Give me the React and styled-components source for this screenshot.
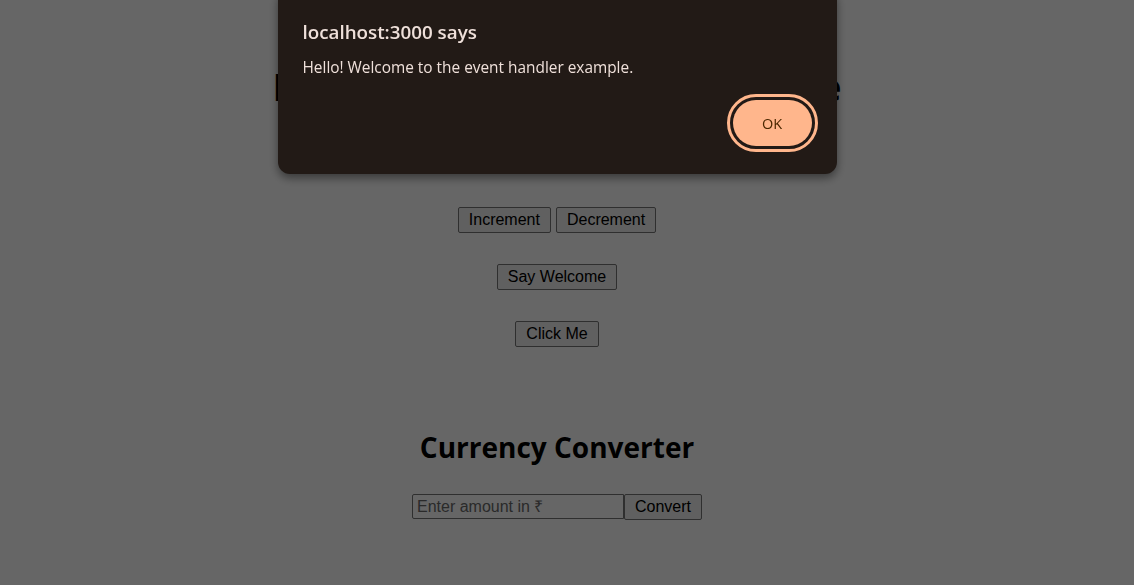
import styled, { createGlobalStyle } from 'styled-components';

const GlobalStyle = createGlobalStyle`
  html, body {
    margin: 0;
    background: #ffffff;
  }
`;

const Page = styled.div`
  width: 1114px;
  min-height: 585px;
  padding-top: 63px;
  box-sizing: border-box;
  display: flex;
  flex-direction: column;
  align-items: center;
  font-family: "Open Sans", "Noto Sans", sans-serif;
  color: #000;
`;

const Title = styled.h1`
  margin: 0;
  font-size: 37.6px;
  line-height: 48px;
  font-weight: 700;
`;

const Row = styled.div`
  display: flex;
  gap: 5px;
  margin-top: ${(p) => p.$top}px;
`;

const Btn = styled.button`
  font-family: "Liberation Sans", Arial, sans-serif;
  font-size: 16px;
  line-height: 18px;
  height: 26px;
  padding: 0 10px;
  background: #efefef;
  color: #000;
  border: 1px solid #767676;
  border-radius: 2px;
  box-sizing: border-box;
`;

const Converter = styled.section`
  margin-top: 82px;
  display: flex;
  flex-direction: column;
  align-items: center;
`;

const SubTitle = styled.h2`
  margin: 0;
  font-size: 28px;
  line-height: 36px;
  font-weight: 700;
`;

const InputRow = styled.div`
  display: flex;
  margin-top: 29px;
`;

const Amount = styled.input`
  width: 212px;
  height: 25px;
  box-sizing: border-box;
  padding: 1px 4px;
  border: 1px solid #767676;
  border-radius: 2px 0 0 2px;
  font-family: "Liberation Sans", Arial, sans-serif;
  font-size: 16px;
  &::placeholder {
    color: #6a6a6a;
  }
`;

const Backdrop = styled.div`
  position: fixed;
  inset: 0;
  background: rgba(0, 0, 0, 0.6);
  display: flex;
  justify-content: center;
  align-items: flex-start;
  padding-right: 20px;
`;

const Dialog = styled.div`
  margin-top: -12px;
  width: 559px;
  box-sizing: border-box;
  padding: 32px 24px 28px 25px;
  background: #221a16;
  border-radius: 12px;
  box-shadow: 0 4px 10px rgba(0, 0, 0, 0.45);
  font-family: "Open Sans", "Noto Sans", sans-serif;
  color: #efe0da;
`;

const DialogTitle = styled.div`
  font-size: 18.8px;
  line-height: 24px;
  font-weight: 600;
`;

const DialogText = styled.div`
  margin-top: 13px;
  font-size: 15.4px;
  line-height: 21px;
`;

const Actions = styled.div`
  display: flex;
  justify-content: flex-end;
  margin-top: 22px;
  padding-right: 1px;
`;

const OkButton = styled.button`
  width: 79px;
  height: 46px;
  border: none;
  border-radius: 999px;
  background: #ffb68c;
  color: #4a2700;
  font-family: "Open Sans", "Noto Sans", sans-serif;
  font-size: 14.5px;
  font-weight: 500;
  outline: 3px solid #ffb68c;
  outline-offset: 3px;
`;

export default function App() {
  return (
    <>
      <GlobalStyle />
      <Page>
        <Title>React Event Handling Example</Title>
        <Row $top={96}>
          <Btn>Increment</Btn>
          <Btn>Decrement</Btn>
        </Row>
        <Row $top={31}>
          <Btn>Say Welcome</Btn>
        </Row>
        <Row $top={31}>
          <Btn>Click Me</Btn>
        </Row>
        <Converter>
          <SubTitle>Currency Converter</SubTitle>
          <InputRow>
            <Amount placeholder="Enter amount in ₹" />
            <Btn>Convert</Btn>
          </InputRow>
        </Converter>
      </Page>
      <Backdrop>
        <Dialog>
          <DialogTitle>localhost:3000 says</DialogTitle>
          <DialogText>Hello! Welcome to the event handler example.</DialogText>
          <Actions>
            <OkButton autoFocus>OK</OkButton>
          </Actions>
        </Dialog>
      </Backdrop>
    </>
  );
}
